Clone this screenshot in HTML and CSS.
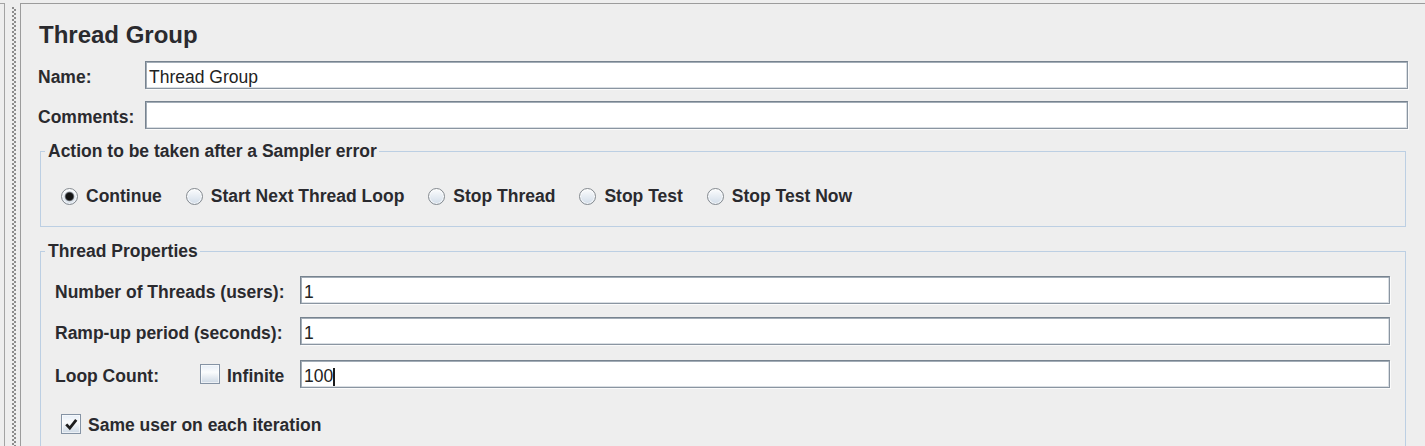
FILE: index.html
```html
<!DOCTYPE html>
<html>
<head>
<meta charset="utf-8">
<title>Thread Group</title>
<link rel="stylesheet" href="styles.css">
</head>
<body>
<div class="app">
  <div class="tree-edge"></div>
  <div class="divider"><div class="grip"></div></div>
  <div class="panel">
    <div class="title">Thread Group</div>
    <div class="row">
      <div class="label name-label">Name:</div>
      <div class="field"><span>Thread Group</span></div>
    </div>
    <div class="row row-gap">
      <div class="label name-label">Comments:</div>
      <div class="field"></div>
    </div>
    <fieldset class="group group-action">
      <legend>Action to be taken after a Sampler error</legend>
      <div class="radios">
        <div class="opt"><span class="radio on"></span><span class="opt-text">Continue</span></div>
        <div class="opt"><span class="radio"></span><span class="opt-text">Start Next Thread Loop</span></div>
        <div class="opt"><span class="radio"></span><span class="opt-text">Stop Thread</span></div>
        <div class="opt"><span class="radio"></span><span class="opt-text">Stop Test</span></div>
        <div class="opt"><span class="radio"></span><span class="opt-text">Stop Test Now</span></div>
      </div>
    </fieldset>
    <fieldset class="group group-props">
      <legend>Thread Properties</legend>
      <div class="props">
        <div class="row">
          <div class="label plabel">Number of Threads (users):</div>
          <div class="field"><span>1</span></div>
        </div>
        <div class="row prow2">
          <div class="label plabel">Ramp-up period (seconds):</div>
          <div class="field"><span>1</span></div>
        </div>
        <div class="row prow3">
          <div class="plabel loop-group">
            <span class="label loop-label">Loop Count:</span>
            <span class="check"></span>
            <span class="label infinite">Infinite</span>
          </div>
          <div class="field"><span>100</span><span class="caret"></span></div>
        </div>
        <div class="crow">
          <span class="check on"><svg width="17" height="17" viewBox="0 0 17 17"><path d="M4.2 9.4 L6.8 12.2 L12.4 5" fill="none" stroke="#1e1e1e" stroke-width="2.8" stroke-linecap="square" stroke-linejoin="miter"/></svg></span>
          <span class="label crow-text">Same user on each iteration</span>
        </div>
      </div>
    </fieldset>
  </div>
</div>
</body>
</html>
```

FILE: styles.css
```css
html, body {
  margin: 0;
  padding: 0;
  background: #eeeeee;
  overflow: hidden;
}

body {
  font-family: "Liberation Sans", Arial, sans-serif;
  color: #2a2a2e;
}

.app {
  display: flex;
  width: 1425px;
  height: 446px;
  padding-top: 3px;
  box-sizing: border-box;
  overflow: hidden;
}

.tree-edge {
  width: 4px;
  flex: none;
  border-top: 1px solid #a3a3a3;
  border-right: 1px solid #a3a3a3;
}

.divider {
  width: 15px;
  flex: none;
  display: flex;
  padding-top: 4px;
  box-sizing: border-box;
}

.grip {
  width: 4px;
  margin-left: 7px;
  background-image:
    radial-gradient(circle at 1px 1px, #8c8c8c 0.9px, transparent 1.1px),
    radial-gradient(circle at 1px 1px, #8c8c8c 0.9px, transparent 1.1px);
  background-size: 4px 4px, 4px 4px;
  background-position: 0 0, 2px 2px;
}

.panel {
  flex: 1;
  min-width: 0;
  border-top: 1px solid #9c9c9c;
  border-left: 1px solid #9c9c9c;
  padding: 17px 17px 0 17px;
}

.title {
  font-weight: bold;
  font-size: 24px;
  line-height: 28px;
  margin-bottom: 12px;
  padding-left: 1px;
}

.row {
  display: flex;
  align-items: center;
  height: 28px;
}

.row-gap {
  margin-top: 12px;
}

.label {
  font-weight: bold;
  font-size: 17.5px;
  line-height: 20px;
  white-space: nowrap;
}

.row > .label {
  padding-top: 4px;
}

.name-label {
  width: 107px;
  flex: none;
}

.field {
  flex: 1;
  height: 28px;
  box-sizing: border-box;
  background: #ffffff;
  border: 1px solid #8a95a1;
  border-top-color: #77838f;
  border-left-color: #77838f;
  box-shadow: inset 1px 1px 0 #a3adb7, inset -1px -1px 0 #d9dee3, 1px 1px 0 #fbfbfb;
  display: flex;
  align-items: center;
  padding: 3px 0 0 3px;
  font-size: 17.5px;
  line-height: 20px;
  color: #222;
  white-space: nowrap;
}

.caret {
  display: inline-block;
  width: 2px;
  height: 18px;
  background: #1a1a1a;
  align-self: center;
  margin-top: 2px;
}

.group {
  margin: 12px 2px 0 2px;
  padding: 0;
  border: 1px solid #bccfe3;
  min-width: 0;
}

.group legend {
  font-weight: bold;
  font-size: 17.5px;
  line-height: 20px;
  margin-left: 4px;
  padding: 0 2px 0 3px;
  white-space: nowrap;
}

.radios {
  display: flex;
  align-items: center;
  height: 20px;
  padding: 25px 0 20px 20px;
}

.opt {
  display: flex;
  align-items: center;
  margin-right: 24px;
}

.radio {
  width: 17px;
  height: 17px;
  box-sizing: border-box;
  border-radius: 50%;
  border: 1px solid #83898f;
  background: linear-gradient(#fbfcfd, #d2dde9);
  box-shadow: inset 0 0 0 1px rgba(255,255,255,0.75);
  flex: none;
}

.radio.on {
  background:
    radial-gradient(circle, #141414 0, #141414 3.4px, #6e7277 4.3px, #e4eaf0 5.2px, transparent 5.7px),
    linear-gradient(#fbfcfd, #d2dde9);
}

.opt-text {
  font-weight: bold;
  font-size: 17.5px;
  line-height: 20px;
  margin-left: 8px;
  white-space: nowrap;
}

.group-props {
  margin-top: 14px;
}

.props {
  padding: 15px 15px 40px 14px;
}

.plabel {
  width: 245px;
  flex: none;
}

.prow2 {
  margin-top: 13px;
}

.prow3 {
  margin-top: 15px;
}

.loop-group {
  display: flex;
  align-items: center;
  height: 28px;
}

.loop-label {
  width: 145px;
  flex: none;
  padding-top: 4px;
}

.infinite {
  margin-left: 7px;
  padding-top: 4px;
}

.check {
  width: 20px;
  height: 20px;
  box-sizing: border-box;
  border: 1px solid #8593a4;
  background: linear-gradient(#e6eef7, #fbfcfd 40%, #cdd8e4);
  box-shadow: inset 0 0 0 1px rgba(255,255,255,0.6);
  flex: none;
  display: flex;
  align-items: center;
  justify-content: center;
}

.check svg {
  display: block;
}

.crow {
  display: flex;
  align-items: center;
  height: 20px;
  margin-top: 26px;
  padding-left: 6px;
}

.crow-text {
  margin-left: 7px;
  padding-top: 2px;
}
```
